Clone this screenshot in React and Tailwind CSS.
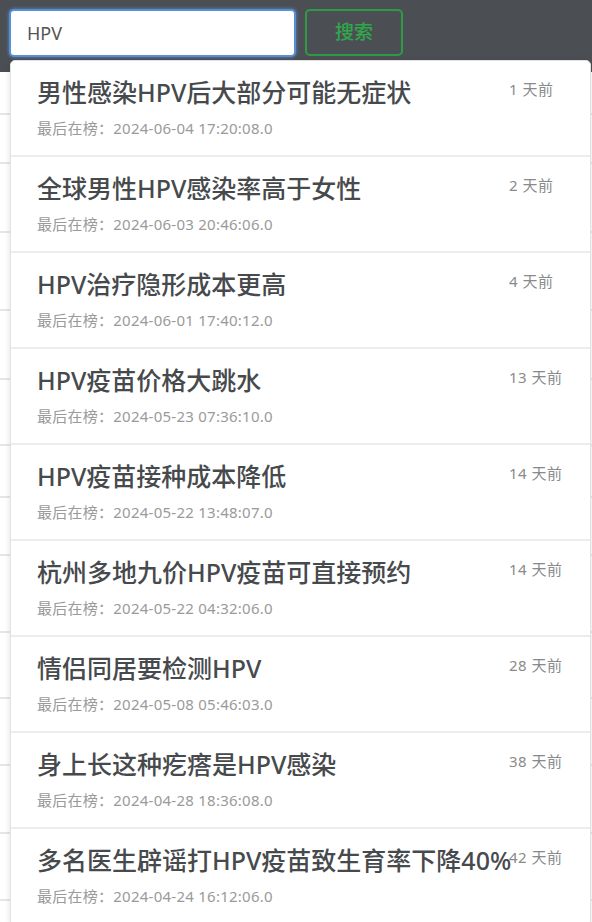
import { useState } from "react";

const results = [
  { title: "男性感染HPV后大部分可能无症状", last: "2024-06-04 17:20:08.0", ago: "1 天前" },
  { title: "全球男性HPV感染率高于女性", last: "2024-06-03 20:46:06.0", ago: "2 天前" },
  { title: "HPV治疗隐形成本更高", last: "2024-06-01 17:40:12.0", ago: "4 天前" },
  { title: "HPV疫苗价格大跳水", last: "2024-05-23 07:36:10.0", ago: "13 天前" },
  { title: "HPV疫苗接种成本降低", last: "2024-05-22 13:48:07.0", ago: "14 天前" },
  { title: "杭州多地九价HPV疫苗可直接预约", last: "2024-05-22 04:32:06.0", ago: "14 天前" },
  { title: "情侣同居要检测HPV", last: "2024-05-08 05:46:03.0", ago: "28 天前" },
  { title: "身上长这种疙瘩是HPV感染", last: "2024-04-28 18:36:08.0", ago: "38 天前" },
  { title: "多名医生辟谣打HPV疫苗致生育率下降40%", last: "2024-04-24 16:12:06.0", ago: "42 天前" },
];

// rows of the list that sits behind the dropdown
const bgRows = [43, 49, 69, 78, 69, 66, 52, 58, 77, 66, 67, 68, 67, 60];

export default function App() {
  const [query, setQuery] = useState("HPV");

  return (
    <div className="relative w-[592px] h-[922px] overflow-hidden bg-white font-['Noto_Sans','Noto_Sans_CJK_SC',sans-serif]">
      <div className="flex items-start gap-[9px] h-[72px] bg-[#4b4f54] pl-[9px] pt-[9px]">
        <input
          value={query}
          onChange={(e) => setQuery(e.target.value)}
          className="w-[287px] h-[48px] rounded-[5px] border-2 border-[#5b8fd0] bg-white px-[16px] text-[18px] text-[#555] outline-none shadow-[0_0_3px_1px_rgba(80,140,220,0.6)]"
        />
        <button className="w-[98px] h-[47px] rounded-[5px] border-2 border-[#2f9a45] text-[19px] text-[#2fa84a] font-medium">
          搜索
        </button>
      </div>

      <div className="flex flex-col">
        {bgRows.map((h, i) => (
          <div key={i} className="border-b-2 border-[#e6e6e6]" style={{ height: h }} />
        ))}
      </div>

      <div className="absolute left-[10px] top-[60px] w-[581px] bg-white border border-[#e2e2e2] rounded-[5px] shadow-[0_2px_6px_rgba(0,0,0,0.12)]">
        {results.map((r, i) => (
          <div key={i} className="flex h-[96px] border-b-2 border-[#ececec] pl-[26px]">
            <div className="flex-1 min-w-0 pt-[15px]">
              <div className="text-[25px] leading-[32px] text-[#474a4d] font-medium whitespace-nowrap">
                {r.title}
              </div>
              <div className="mt-[10px] text-[15px] leading-[20px] tracking-[0.25px] text-[#9a9a9a]">
                最后在榜：{r.last}
              </div>
            </div>
            <div className="w-[81px] shrink-0 pt-[18px] text-[15px] leading-[20px] tracking-[0.5px] text-[#8a8a8a]">
              {r.ago}
            </div>
          </div>
        ))}
      </div>
    </div>
  );
}
